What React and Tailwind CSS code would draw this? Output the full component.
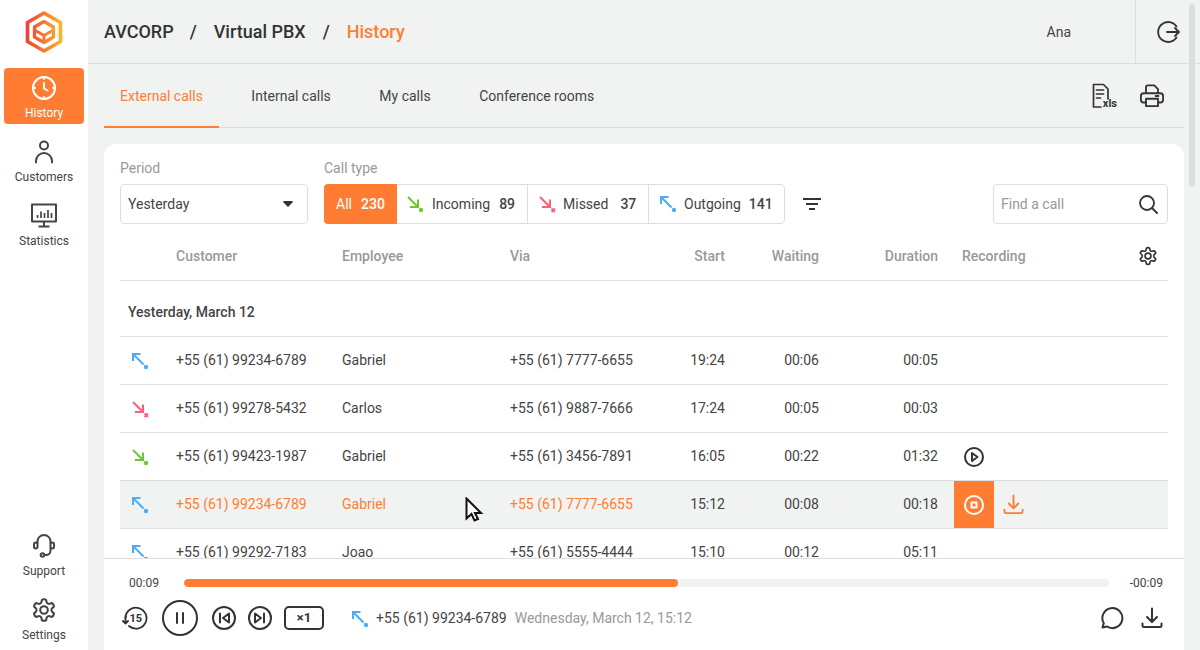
import React from 'react';

const calls = [
  { type: 'out', phone: '+55 (61) 99234-6789', employee: 'Gabriel', via: '+55 (61) 7777-6655', start: '19:24', waiting: '00:06', duration: '00:05' },
  { type: 'missed', phone: '+55 (61) 99278-5432', employee: 'Carlos', via: '+55 (61) 9887-7666', start: '17:24', waiting: '00:05', duration: '00:03' },
  { type: 'in', phone: '+55 (61) 99423-1987', employee: 'Gabriel', via: '+55 (61) 3456-7891', start: '16:05', waiting: '00:22', duration: '01:32', recording: 'play' },
  { type: 'out', phone: '+55 (61) 99234-6789', employee: 'Gabriel', via: '+55 (61) 7777-6655', start: '15:12', waiting: '00:08', duration: '00:18', recording: 'active' },
  { type: 'out', phone: '+55 (61) 99292-7183', employee: 'Joao', via: '+55 (61) 5555-4444', start: '15:10', waiting: '00:12', duration: '05:11' },
];

const gridCols = 'grid grid-cols-[56px_166px_168px_150px_65px_94px_119px_1fr] items-center';

function CallIcon({ type }) {
  if (type === 'out') {
    return (
      <svg width="20" height="20" viewBox="0 0 20 20" fill="none" stroke="#4dabf7" strokeWidth="2">
        <path d="M3 10V3h7.500M3 3l10.500 10.500" />
        <circle cx="16" cy="16" r="2.200" fill="#4dabf7" stroke="none" />
      </svg>
    );
  }
  if (type === 'in') {
    return (
      <svg width="20" height="20" viewBox="0 0 20 20" fill="none" stroke="#6cc92f" strokeWidth="2">
        <path d="M3 3l10 10M13 5.500V13H5" />
        <circle cx="16" cy="16" r="2.200" fill="#6cc92f" stroke="none" />
      </svg>
    );
  }
  return (
    <svg width="20" height="20" viewBox="0 0 20 20" fill="none" stroke="#fb6078" strokeWidth="2">
      <path d="M3 3l10 10M13 5.500V13H5" />
      <path d="M14.500 14.500l3.500 3.500M18 14.500l-3.500 3.500" strokeWidth="1.800" />
    </svg>
  );
}

function Logo() {
  return (
    <svg width="40" height="44" viewBox="0 0 40 44" fill="none">
      <defs>
        <linearGradient id="logoGrad" gradientUnits="userSpaceOnUse" x1="2" y1="22" x2="38" y2="22">
          <stop offset="0" stopColor="#ee3f33" />
          <stop offset="0.55" stopColor="#fb7d2f" />
          <stop offset="1" stopColor="#fdb92f" />
        </linearGradient>
      </defs>
      <g stroke="url(#logoGrad)" strokeLinejoin="round">
        <path d="M20 3l16.500 9.500v19L20 41 3.500 31.500v-19z" strokeWidth="3.600" />
        <path d="M20 11.500l9.500 5.500v10L20 32.500 10.500 27V17z" strokeWidth="3.200" />
        <path d="M10.500 20L20 25.500l9.500-5.500M20 25.500v7" strokeWidth="3" />
      </g>
    </svg>
  );
}

function NavItem({ label, active, children }) {
  return (
    <div className={`w-20 h-14 flex flex-col items-center justify-between pt-[7px] pb-[3px] rounded text-xs ${active ? 'bg-[#ff7d32] text-white' : 'text-[#444]'}`}>
      {children}
      <span>{label}</span>
    </div>
  );
}

const iconStroke = { fill: 'none', stroke: 'currentColor', strokeWidth: 2, strokeLinecap: 'round', strokeLinejoin: 'round' };

function Sidebar() {
  return (
    <aside className="w-[88px] shrink-0 bg-white flex flex-col items-center">
      <div className="h-[68px] pt-[10px] shrink-0"><Logo /></div>
      <div className="flex flex-col gap-2">
        <NavItem label="History" active>
          <svg width="26" height="26" viewBox="0 0 26 26" {...iconStroke}>
            <circle cx="13" cy="13" r="11" />
            <path d="M13 2v2M13 22v2M2 13h2M22 13h2M13 8v5.500l3.500 2" />
          </svg>
        </NavItem>
        <NavItem label="Customers">
          <svg width="26" height="26" viewBox="0 0 26 26" {...iconStroke}>
            <circle cx="13" cy="6.500" r="4" />
            <path d="M5 23.500v-1.500a8 8 0 0 1 16 0v1.500" />
          </svg>
        </NavItem>
        <NavItem label="Statistics">
          <svg width="26" height="26" viewBox="0 0 26 26" {...iconStroke} strokeLinecap="butt">
            <rect x="1" y="1.500" width="24" height="17" />
            <path d="M13 18.500v5M7.500 23.500h11" />
            <path d="M6.500 15v-3M10 15V8.500M13.500 15v-5M17 15V7M20.500 15V10" strokeWidth="1.700" />
          </svg>
        </NavItem>
      </div>
      <div className="mt-auto flex flex-col gap-2 pb-1">
        <NavItem label="Support">
          <svg width="26" height="26" viewBox="0 0 26 26" {...iconStroke}>
            <path d="M6.500 10V8.500a6.500 6.500 0 0 1 13 0V10M19.500 15v2.500a4.500 4.500 0 0 1-4.500 4.500h-1.500" />
            <rect x="3" y="9.500" width="3.500" height="6" rx="1.700" />
            <rect x="19.500" y="9.500" width="3.500" height="6" rx="1.700" />
            <circle cx="11.500" cy="22" r="1.800" />
          </svg>
        </NavItem>
        <NavItem label="Settings">
          <Gear size={26} />
        </NavItem>
      </div>
    </aside>
  );
}

function Gear({ size }) {
  return (
    <svg width={size} height={size} viewBox="0 0 24 24" {...iconStroke} strokeWidth={size < 24 ? 2 : 1.900}>
      <path d="M12.220 2h-.440a2 2 0 0 0-2 2v.180a2 2 0 0 1-1 1.730l-.430.250a2 2 0 0 1-2 0l-.150-.080a2 2 0 0 0-2.730.730l-.220.380a2 2 0 0 0 .730 2.730l.150.100a2 2 0 0 1 1 1.720v.510a2 2 0 0 1-1 1.740l-.150.090a2 2 0 0 0-.730 2.730l.220.380a2 2 0 0 0 2.730.730l.150-.080a2 2 0 0 1 2 0l.430.250a2 2 0 0 1 1 1.730V20a2 2 0 0 0 2 2h.440a2 2 0 0 0 2-2v-.180a2 2 0 0 1 1-1.730l.430-.250a2 2 0 0 1 2 0l.150.080a2 2 0 0 0 2.730-.730l.220-.390a2 2 0 0 0-.730-2.730l-.150-.080a2 2 0 0 1-1-1.740v-.500a2 2 0 0 1 1-1.740l.150-.090a2 2 0 0 0 .730-2.730l-.220-.380a2 2 0 0 0-2.730-.730l-.150.080a2 2 0 0 1-2 0l-.430-.250a2 2 0 0 1-1-1.730V4a2 2 0 0 0-2-2z" />
      <circle cx="12" cy="12" r="3.500" />
    </svg>
  );
}

function Header() {
  return (
    <header className="h-16 shrink-0 flex items-center border-b border-[#dcdedf] pl-4 text-[18px] font-medium text-[#333]">
      <span>AVCORP</span>
      <span className="ml-[16px] mr-[17px]">/</span>
      <span>Virtual PBX</span>
      <span className="ml-[17px] mr-[17px]">/</span>
      <span className="text-[#ff7d32]">History</span>
      <span className="ml-auto mr-[64px] text-sm font-normal text-[#444]">Ana</span>
      <div className="w-[65px] h-full border-l border-[#dcdedf] flex items-center pl-[21px]">
        <svg width="24" height="24" viewBox="0 0 24 24" {...iconStroke} strokeWidth="1.800">
          <path d="M19.500 6.500A10 10 0 1 0 19.500 17.500M10 12h12M18 8l4 4-4 4" />
        </svg>
      </div>
    </header>
  );
}

function Tabs() {
  const tabs = ['External calls', 'Internal calls', 'My calls', 'Conference rooms'];
  return (
    <nav className="h-16 shrink-0 mx-4 flex items-stretch border-b border-[#dcdedf] text-sm text-[#444]">
      <div className="flex gap-[16.500px]">
        {tabs.map((t, i) => (
          <div key={t} className={`px-4 flex items-center ${i === 0 ? 'text-[#ff7d32] border-b-2 border-[#ff7d32] -mb-px pt-[2px]' : ''}`}>{t}</div>
        ))}
      </div>
      <div className="ml-auto mr-[20px] flex items-center gap-[22px] text-[#333]">
        <div className="relative w-[27px] h-[28px]">
          <svg width="27" height="28" viewBox="0 0 27 28" {...iconStroke} strokeWidth="1.700">
            <path d="M10 25H2.500V2.500H12.500L17 7V17M5.500 8h7M5.500 12h7M5.500 16h4" />
          </svg>
          <span className="absolute right-[1px] bottom-0 text-[11px] leading-[13px] font-bold">xls</span>
        </div>
        <svg width="24" height="24" viewBox="0 0 26 26" {...iconStroke}>
          <path d="M6.500 10V3.500a2 2 0 0 1 2-2h7l4 4V10M6.500 20H4a3 3 0 0 1-3-3v-4a3 3 0 0 1 3-3h18a3 3 0 0 1 3 3v4a3 3 0 0 1-3 3h-2.500M6.500 16h13v8h-13zM17 13h3" />
        </svg>
      </div>
    </nav>
  );
}

function Filters() {
  return (
    <div className="flex items-end pt-4 shrink-0">
      <div className="w-[188px] mr-4">
        <div className="text-sm text-[#999] mb-2 leading-4">Period</div>
        <div className="h-10 border border-[#dcdedf] rounded flex items-center pl-[7px] pr-[13px] text-sm text-[#444] justify-between">
          <span>Yesterday</span>
          <span className="w-0 h-0 border-x-[6px] border-x-transparent border-t-[6px] border-t-[#333] rounded-sm"></span>
        </div>
      </div>
      <div>
        <div className="text-sm text-[#999] mb-2 leading-4">Call type</div>
        <div className="h-10 flex text-sm text-[#444] border border-[#dcdedf] rounded">
          <div className="w-[73px] -m-px h-10 bg-[#ff7d32] text-white rounded-l flex items-center justify-center gap-[9px]">
            <span>All</span><span className="font-medium">230</span>
          </div>
          <FilterTab type="in" label="Incoming" count="89" width="w-[132px]" labelClass="ml-[7px]" countClass="ml-[9px]" />
          <FilterTab type="missed" label="Missed" count="37" width="w-[121px]" labelClass="ml-[6px]" countClass="ml-[12px]" />
          <FilterTab type="out" label="Outgoing" count="141" width="w-[135px]" labelClass="ml-[6px]" countClass="ml-2" last />
        </div>
      </div>
      <div className="h-10 ml-[18px] flex items-center">
        <svg width="18" height="14" viewBox="0 0 18 14" fill="none" stroke="#333" strokeWidth="2"><path d="M0 2h18M3 7h12M6 12h6" /></svg>
      </div>
      <div className="ml-auto w-[175px] h-10 border border-[#dcdedf] rounded flex items-center justify-between pl-[7px] pr-[9px] text-sm text-[#999]">
        <span>Find a call</span>
        <svg width="20" height="20" viewBox="0 0 20 20" fill="none" stroke="#333" strokeWidth="1.800" strokeLinecap="round"><circle cx="9" cy="9" r="7" /><path d="M14 14l5 5" /></svg>
      </div>
    </div>
  );
}

function FilterTab({ type, label, count, width, labelClass, countClass, last }) {
  return (
    <div className={`${width} flex items-center pl-[9px] ${last ? '' : 'border-r border-[#dcdedf]'}`}>
      <CallIcon type={type} />
      <span className={labelClass}>{label}</span>
      <span className={`font-medium ${countClass}`}>{count}</span>
    </div>
  );
}

function TableHead() {
  return (
    <div className={`${gridCols} h-[57px] shrink-0 border-b border-[#dcdedf] text-sm font-medium text-[#999] pt-2`}>
      <span></span>
      <span>Customer</span>
      <span>Employee</span>
      <span>Via</span>
      <span className="text-right">Start</span>
      <span className="text-right">Waiting</span>
      <span className="text-right">Duration</span>
      <div className="flex items-center justify-between pl-6">
        <span>Recording</span>
        <span className="text-[#333] mr-[10px]"><Gear size={20} /></span>
      </div>
    </div>
  );
}

function Row({ call }) {
  const active = call.recording === 'active';
  return (
    <div className={`${gridCols} h-12 shrink-0 border-b border-[#dcdedf] text-sm leading-[19px] text-[#444] ${active ? 'bg-[#f1f3f3]' : ''}`}>
      <span className="pl-[10px]"><CallIcon type={call.type} /></span>
      <span className={active ? 'text-[#ff7d32]' : ''}>{call.phone}</span>
      <span className={active ? 'text-[#ff7d32]' : ''}>{call.employee}</span>
      <span className={active ? 'text-[#ff7d32]' : ''}>{call.via}</span>
      <span className="text-right">{call.start}</span>
      <span className="text-right">{call.waiting}</span>
      <span className="text-right">{call.duration}</span>
      <div className="pl-4 h-full flex items-center">
        {call.recording === 'play' && (
          <div className="w-10 h-full flex items-center justify-center text-[#333]">
            <svg width="22" height="22" viewBox="0 0 22 22" {...iconStroke}><circle cx="11" cy="11" r="9" /><path d="M9 7l5.500 4L9 15z" /></svg>
          </div>
        )}
        {active && (
          <>
            <div className="w-10 h-full bg-[#ff7d32] flex items-center justify-center text-white">
              <svg width="22" height="22" viewBox="0 0 22 22" {...iconStroke}><circle cx="11" cy="11" r="9" /><rect x="8.500" y="8.500" width="5" height="5" /></svg>
            </div>
            <div className="ml-[9px] text-[#ff7d32]"><DownloadIcon size={21} /></div>
          </>
        )}
      </div>
    </div>
  );
}

function DownloadIcon({ size = 22 }) {
  return (
    <svg width={size} height={size} viewBox="0 0 22 22" {...iconStroke}>
      <path d="M11 1.500v13M6 10l5 5 5-5M1.500 16.500v2a1.500 1.500 0 0 0 1.500 1.500h16a1.500 1.500 0 0 0 1.500-1.500v-2" />
    </svg>
  );
}

function Player() {
  return (
    <div className="h-[92px] shrink-0 border-t border-[#dcdedf] bg-white text-[#444]">
      <div className="flex items-center h-[47px] pl-[25px] pr-[21px] text-xs">
        <span className="w-[55px]">00:09</span>
        <div className="flex-1 h-2 rounded bg-[#f1f3f3] overflow-hidden">
          <div className="h-full bg-[#ff7d32] rounded" style={{ width: '53.4%' }}></div>
        </div>
        <span className="w-[54px] text-right">-00:09</span>
      </div>
      <div className="flex items-center h-[24px] pl-[18px] pr-[21px] text-[#333]">
        <svg width="26" height="24" viewBox="0 0 26 24" {...iconStroke} className="mr-[14px]">
          <path d="M3.500 12A10.500 10.500 0 1 1 7 20" strokeWidth="1.800" />
          <path d="M3.500 10v7.500M1 15l2.500 2.500L6 15" strokeWidth="1.800" />
          <text x="7.500" y="16" fontSize="11" fontWeight="700" fill="currentColor" stroke="none" fontFamily="Roboto, sans-serif">15</text>
        </svg>
        <svg width="36" height="36" viewBox="0 0 36 36" {...iconStroke} className="-my-2">
          <circle cx="18" cy="18" r="17" />
          <path d="M15 13v10M21 13v10" />
        </svg>
        <svg width="24" height="24" viewBox="0 0 24 24" {...iconStroke} className="ml-[14px]">
          <circle cx="12" cy="12" r="11" />
          <path d="M8 7.500v9M17 7.500v9L11 12z" />
        </svg>
        <svg width="24" height="24" viewBox="0 0 24 24" {...iconStroke} className="ml-[12px]">
          <circle cx="12" cy="12" r="11" />
          <path d="M16 7.500v9M7 7.500v9L13 12z" />
        </svg>
        <div className="ml-[12px] w-10 h-6 border-2 border-[#333] rounded-[5px] flex items-center justify-center text-[13px] font-bold">×1</div>
        <div className="ml-[26px] mr-[4px] pt-[1px]"><CallIcon type="out" /></div>
        <span className="text-sm text-[#444] ml-[2px]">+55 (61) 99234-6789</span>
        <span className="ml-2 text-sm text-[#999]">Wednesday, March 12, 15:12</span>
        <svg width="24" height="24" viewBox="0 0 24 24" {...iconStroke} className="ml-auto">
          <path d="M2.500 21.500l1.300-4.300A10 10 0 1 1 7 20.500z" />
        </svg>
        <div className="ml-[17px]"><DownloadIcon /></div>
      </div>
    </div>
  );
}

export default function App() {
  return (
    <div className="relative w-[1200px] h-[650px] overflow-hidden flex bg-[#f1f3f3] font-['Roboto',sans-serif]">
      <Sidebar />
      <main className="flex-1 min-w-0 flex flex-col">
        <Header />
        <Tabs />
        <section className="flex-1 min-h-0 mt-4 mx-4 bg-white rounded-t-xl flex flex-col overflow-hidden">
          <div className="flex-1 min-h-0 px-4 overflow-hidden flex flex-col">
            <Filters />
            <TableHead />
            <div className="h-14 shrink-0 border-b border-[#dcdedf] flex items-center pl-2 pt-[7px] text-sm font-medium text-[#444]">Yesterday, March 12</div>
            {calls.map((c, i) => <Row key={i} call={c} />)}
          </div>
          <Player />
        </section>
      </main>
      {/* scrollbar */}
      <div className="absolute right-[5px] top-[4px] w-[6px] h-[183px] rounded bg-[#dcdedf]"></div>
      {/* mouse pointer */}
      <svg className="absolute left-[465px] top-[497px]" width="20" height="26" viewBox="0 0 20 26">
        <path d="M1.500 1.500v20l5-4.500 3 6.500 3.500-1.500-3-6h6z" fill="#fff" stroke="#111" strokeWidth="2" strokeLinejoin="miter" />
      </svg>
    </div>
  );
}
